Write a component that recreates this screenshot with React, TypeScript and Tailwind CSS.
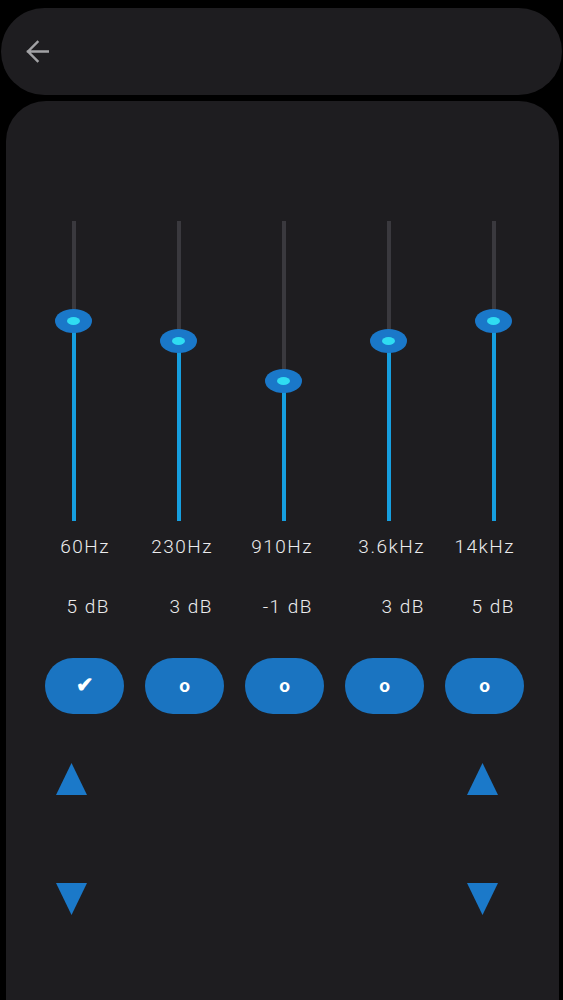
type Band = {
  freq: string;
  gain: number;
  labelPad: string;
};

// right edge of each label pair sits a little inside its column
const bands: Band[] = [
  { freq: "60Hz", gain: 5, labelPad: "pr-[16px]" },
  { freq: "230Hz", gain: 3, labelPad: "pr-[18px]" },
  { freq: "910Hz", gain: -1, labelPad: "pr-[23px]" },
  { freq: "3.6kHz", gain: 3, labelPad: "pr-[16px]" },
  { freq: "14kHz", gain: 5, labelPad: "pr-[31px]" },
];

const MAX_DB = 15;
const PX_PER_DB = 10;

const font = { fontFamily: "Roboto, 'Noto Sans', sans-serif" };

const BackArrow = () => (
  <svg width="23" height="23" viewBox="0 0 23 23" fill="none">
    <path
      d="M22 11.5H2M11.5 2L2 11.5L11.5 21"
      stroke="#a2a2a5"
      strokeWidth="2.4"
      strokeLinecap="square"
    />
  </svg>
);

const BandSlider = ({ gain }: { gain: number }) => {
  const offset = (MAX_DB - gain) * PX_PER_DB;

  return (
    <div className="relative flex h-[300px] w-[37px] justify-center">
      <div className="flex h-full w-[4px] flex-col">
        <div className="bg-[#3a393e]" style={{ height: offset }} />
        <div className="flex-1 bg-[#169edf]" />
      </div>
      <div
        className="absolute left-0 flex h-[24px] w-[37px] -translate-y-1/2 items-center justify-center rounded-[50%] bg-[#1a78c9]"
        style={{ top: offset }}
      >
        <div className="h-[8px] w-[13px] rounded-[50%] bg-[#2fdcf2]" />
      </div>
    </div>
  );
};

const Triangle = ({ up }: { up?: boolean }) => (
  <svg width="31" height="32" viewBox="0 0 31 32">
    <polygon
      points={up ? "15.5,0 31,32 0,32" : "0,0 31,0 15.5,32"}
      fill="#1b79c9"
    />
  </svg>
);

export default function App() {
  return (
    <div className="flex h-[1000px] flex-col overflow-hidden bg-black" style={font}>
      <header className="mx-[1px] mt-[8px] flex h-[87px] items-center rounded-[44px] bg-[#1e1d20] pl-[25px]">
        <BackArrow />
      </header>

      <main className="ml-[6px] mr-[4px] mt-[6px] flex-1 rounded-t-[40px] bg-[#1e1d20] pt-[120px]">
        <div className="grid grid-cols-[repeat(5,105px)] pl-[15px]">
          {bands.map((b) => (
            <div key={b.freq} className="flex justify-center">
              <BandSlider gain={b.gain} />
            </div>
          ))}
        </div>

        <div className="mt-[14px] grid grid-cols-[repeat(5,105px)] pl-[15px] text-[19px] font-light tracking-[1.5px] text-[#ececee]">
          {bands.map((b) => (
            <div key={b.freq} className={`flex flex-col items-end ${b.labelPad}`}>
              <span className="leading-[24px]">{b.freq}</span>
              <span className="mt-[36px] leading-[24px]">{b.gain} dB</span>
            </div>
          ))}
        </div>

        <div className="mt-[39px] flex gap-[21px] pl-[39px]">
          {bands.map((b, i) => (
            <button
              key={b.freq}
              className={`flex h-[56px] w-[79px] items-center justify-center rounded-full bg-[#1a74c1] font-bold text-white ${
                i === 0 ? "text-[21px]" : "text-[19px]"
              }`}
            >
              {i === 0 ? "✔" : "o"}
            </button>
          ))}
        </div>

        <div className="mt-[49px] flex justify-between pl-[50px] pr-[61px]">
          {[0, 1].map((k) => (
            <div key={k} className="flex flex-col gap-[88px]">
              <Triangle up />
              <Triangle />
            </div>
          ))}
        </div>
      </main>
    </div>
  );
}
